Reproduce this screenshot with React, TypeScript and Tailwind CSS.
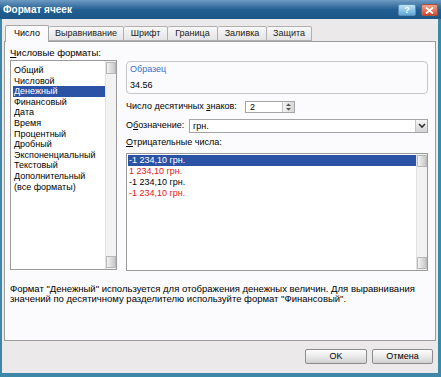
import React from 'react';

const formats = [
    'Общий',
    'Числовой',
    'Денежный',
    'Финансовый',
    'Дата',
    'Время',
    'Процентный',
    'Дробный',
    'Экспоненциальный',
    'Текстовый',
    'Дополнительный',
    '(все форматы)',
];

const negatives = [
    { text: '-1 234,10 грн.', red: false, selected: true },
    { text: '1 234,10 грн.', red: true, selected: false },
    { text: '-1 234,10 грн.', red: false, selected: false },
    { text: '-1 234,10 грн.', red: true, selected: false },
];

const tabs = ['Число', 'Выравнивание', 'Шрифт', 'Граница', 'Заливка', 'Защита'];
const tabWidths = ['w-[44px]', 'w-[75px]', 'w-[44px]', 'w-[50px]', 'w-[49px]', 'w-[45px]'];

function Thumb() {
    return <div className="h-[12px] w-full border border-[#b8b8b8] bg-gradient-to-r from-[#f4f4f4] via-[#dcdcdc] to-[#c8c8c8]" />;
}

function ScrollTrack() {
    return (
        <div className="w-[11px] flex flex-col justify-between bg-[#f2f2f2] border-l border-[#e2e2e2] py-[1px]">
            <Thumb />
            <Thumb />
        </div>
    );
}

function Button({ label, width }: { label: string; width: string }) {
    return (
        <button className={`${width} h-[15px] rounded-[2px] border border-[#8c8c8c] bg-gradient-to-b from-[#fdfdfd] via-[#eaeaea] to-[#d2d2d2] text-[9px] leading-none`}>
            {label}
        </button>
    );
}

export default function App() {
    return (
        <div className="w-[441px] h-[377px] flex flex-col bg-[#ebe9ea] text-[9px] text-black font-['Liberation_Sans',Arial,sans-serif] overflow-hidden">
            {/* Title bar */}
            <div className="h-[19px] flex items-center justify-between pl-[3px] pr-[3px] bg-gradient-to-b from-[#6d9cc4] via-[#245f92] to-[#1b5687]">
                <span className="text-[10px] font-bold text-white">Формат ячеек</span>
                <div className="flex items-center gap-[5px] pt-[1px]">
                    <div className="w-[18px] h-[12px] rounded-[2px] border border-[#5a8fb8] bg-gradient-to-b from-[#bfe3f6] to-[#5fa9d6] flex items-center justify-center text-[9px] font-bold text-white leading-none">?</div>
                    <div className="w-[17px] h-[12px] rounded-[2px] border border-[#b0503a] bg-gradient-to-b from-[#f2a48c] to-[#d2462b] flex items-center justify-center">
                        <svg width="9" height="7" viewBox="0 0 9 7">
                            <path d="M1 0.5 L8 6.5 M8 0.5 L1 6.5" stroke="white" strokeWidth="1.8" />
                        </svg>
                    </div>
                </div>
            </div>

            {/* Window body */}
            <div className="flex-1 flex flex-col border-l-2 border-r-[3px] border-b-4 border-[#3f87a8]">
                {/* Tabs */}
                <div className="flex items-end h-[22px] pl-[3px]">
                    {tabs.map((t, i) => (
                        <div
                            key={t}
                            className={
                                i === 0
                                    ? `${tabWidths[i]} h-[17px] -mb-[1px] z-10 flex items-center justify-center border border-b-0 border-[#a7a7a7] rounded-t-[2px] bg-[#fbfbfd]`
                                    : `${tabWidths[i]} h-[15px] flex items-center justify-center border border-[#b0b0b0] border-l-0 rounded-t-[2px] bg-gradient-to-b from-[#f8f8f8] to-[#e4e4e4] text-[#222]`
                            }
                        >
                            {t}
                        </div>
                    ))}
                </div>

                {/* Panel */}
                <div className="mx-[2px] h-[300px] flex flex-col border border-[#9c9c9c] bg-[#fbfbfd] pt-[5px] pl-[5px] pr-[5px]">
                    <div className="flex gap-[9px]">
                        {/* Left: categories */}
                        <div className="w-[107px] flex flex-col">
                            <div className="h-[12px] leading-[12px] text-[9.5px]">
                                <span className="underline">Ч</span>исловые форматы:
                            </div>
                            <div className="mt-[1px] h-[210px] flex border border-[#9a9a9a] bg-white">
                                <div className="flex-1 pt-[4px] pl-[2px]">
                                    {formats.map((f) => (
                                        <div
                                            key={f}
                                            className={
                                                f === 'Денежный'
                                                    ? 'h-[10.6px] leading-[10.6px] pl-[1px] bg-[#2c52a6] text-white'
                                                    : 'h-[10.6px] leading-[10.6px] pl-[1px]'
                                            }
                                        >
                                            {f}
                                        </div>
                                    ))}
                                </div>
                                <ScrollTrack />
                            </div>
                        </div>

                        {/* Right: options */}
                        <div className="w-[302px] flex flex-col">
                            <div className="mt-[14px] h-[33px] rounded-[4px] border border-[#c6c6c6] pl-[3px] flex flex-col">
                                <div className="h-[14px] leading-[14px] text-[#3a6fc0]">Образец</div>
                                <div className="mt-[3px] h-[12px] leading-[12px]">34.56</div>
                            </div>

                            <div className="mt-[7px] h-[12px] flex items-center whitespace-nowrap">
                                <span className="w-[119px]">
                                    Число десятичных <span className="underline">з</span>наков:
                                </span>
                                <div className="w-[50px] h-[12px] flex border border-[#a5a5a5] bg-white">
                                    <span className="flex-1 pl-[4px] leading-[10px]">2</span>
                                    <div className="w-[12px] flex flex-col border-l border-[#c4c4c4] bg-gradient-to-r from-[#f3f3f3] to-[#d6d6d6]">
                                        <svg width="11" height="10" viewBox="0 0 11 10">
                                            <path d="M3 4 L5.5 1.5 L8 4 Z M3 6 L5.5 8.5 L8 6 Z" fill="#555" />
                                        </svg>
                                    </div>
                                </div>
                            </div>

                            <div className="mt-[6px] h-[14px] flex items-center whitespace-nowrap">
                                <span className="w-[63px]">
                                    О<span className="underline">б</span>означение:
                                </span>
                                <div className="flex-1 h-[14px] flex border border-[#a5a5a5] bg-white">
                                    <span className="flex-1 pl-[3px] leading-[12px]">грн.</span>
                                    <div className="w-[12px] flex items-center justify-center border-l border-[#c4c4c4] bg-gradient-to-b from-[#f6f6f6] to-[#d4d4d4]">
                                        <svg width="8" height="6" viewBox="0 0 8 6">
                                            <path d="M1 1 L4 4 L7 1" stroke="#333" strokeWidth="1.6" fill="none" />
                                        </svg>
                                    </div>
                                </div>
                            </div>

                            <div className="mt-[3px] h-[12px] leading-[12px]">
                                <span className="underline">О</span>трицательные числа:
                            </div>

                            <div className="mt-[5px] h-[118px] flex border border-[#9a9a9a] bg-white">
                                <div className="flex-1 pt-[1px] pl-[1px]">
                                    {negatives.map((n, i) => (
                                        <div
                                            key={i}
                                            className={
                                                n.selected
                                                    ? 'h-[11px] leading-[11px] pl-[1px] bg-[#2c52a6] text-white'
                                                    : n.red
                                                      ? 'h-[11px] leading-[11px] pl-[1px] text-[#e01818]'
                                                      : 'h-[11px] leading-[11px] pl-[1px]'
                                            }
                                        >
                                            {n.text}
                                        </div>
                                    ))}
                                </div>
                                <ScrollTrack />
                            </div>
                        </div>
                    </div>

                    <p className="mt-[13px] leading-[10px] whitespace-nowrap text-[9.5px]">
                        Формат "Денежный" используется для отображения денежных величин. Для выравнивания
                        <br />
                        значений по десятичному разделителю используйте формат "Финансовый".
                    </p>
                </div>

                {/* Buttons */}
                <div className="mt-[8px] flex justify-end gap-[5px] pr-[5px]">
                    <Button label="OK" width="w-[62px]" />
                    <Button label="Отмена" width="w-[61px]" />
                </div>
            </div>
        </div>
    );
}
